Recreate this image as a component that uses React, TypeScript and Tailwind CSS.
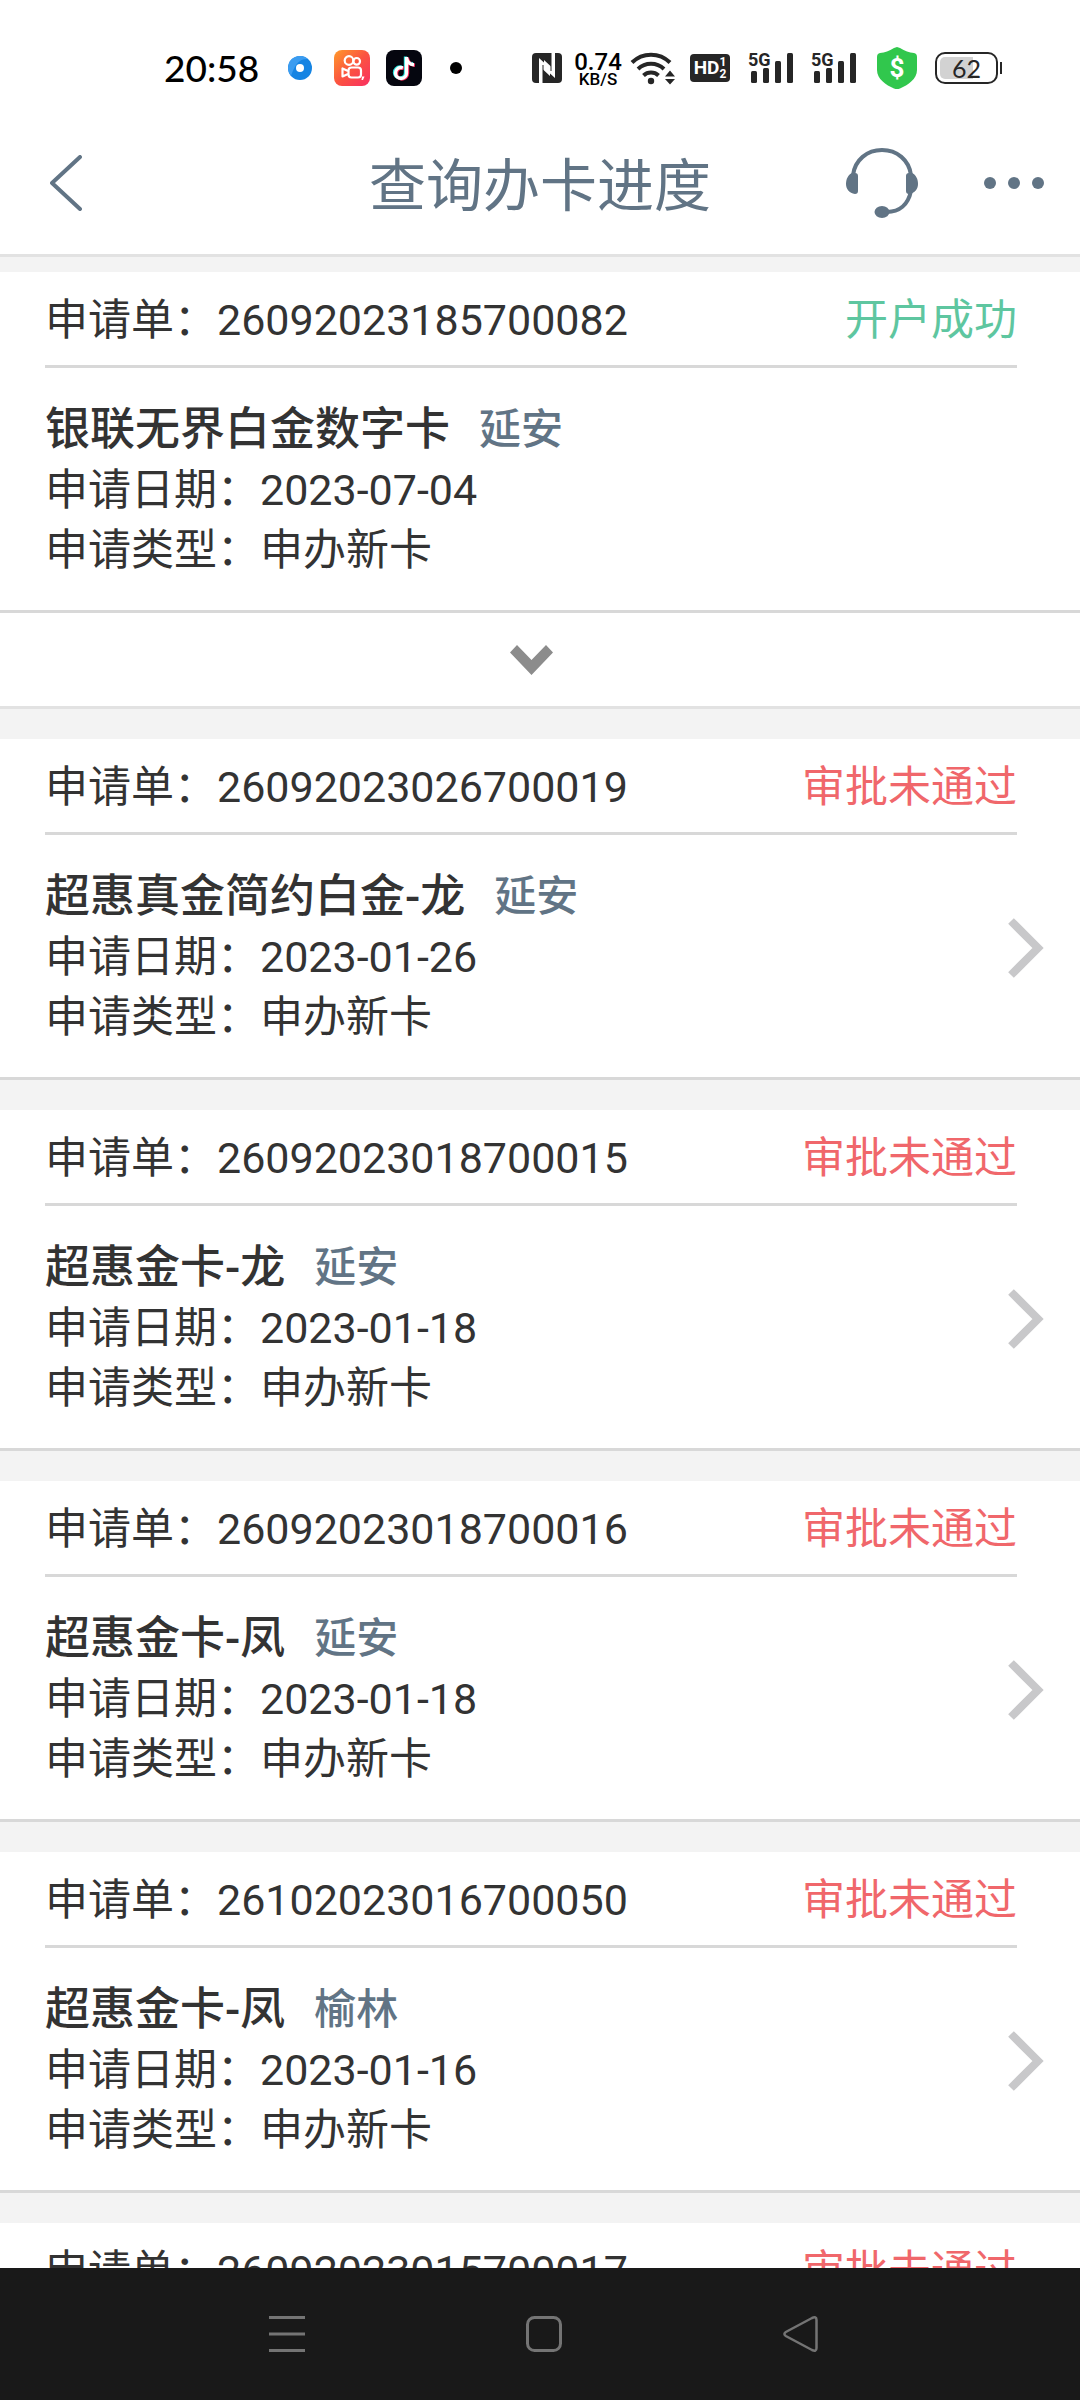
import React from 'react';

interface Application {
  id: string;
  status: 'success' | 'rejected';
  card?: string;
  city?: string;
  date?: string;
  expandable?: boolean;
}

const APPLICATIONS: Application[] = [
  { id: '26092023185700082', status: 'success', card: '银联无界白金数字卡', city: '延安', date: '2023-07-04', expandable: true },
  { id: '26092023026700019', status: 'rejected', card: '超惠真金简约白金-龙', city: '延安', date: '2023-01-26' },
  { id: '26092023018700015', status: 'rejected', card: '超惠金卡-龙', city: '延安', date: '2023-01-18' },
  { id: '26092023018700016', status: 'rejected', card: '超惠金卡-凤', city: '延安', date: '2023-01-18' },
  { id: '26102023016700050', status: 'rejected', card: '超惠金卡-凤', city: '榆林', date: '2023-01-16' },
  { id: '26092023015700017', status: 'rejected' },
];

function SignalIcon() {
  return (
    <div className="relative h-8 w-[46px] text-[#262626]">
      <span className="absolute left-0 top-0 font-['Roboto',sans-serif] text-[18px] font-bold leading-4">5G</span>
      <svg viewBox="0 0 46 32" className="h-8 w-[46px]" fill="currentColor">
        <rect x="3" y="19" width="6" height="12" rx="1.5" />
        <rect x="15" y="16" width="6" height="15" rx="1.5" />
        <rect x="27" y="9" width="6" height="22" rx="1.5" />
        <rect x="39" y="1" width="6" height="30" rx="1.5" />
      </svg>
    </div>
  );
}

function StatusBar() {
  return (
    <div className="flex h-28 items-center justify-between pl-[164px] pr-[78px] pt-6 text-black">
      <div className="flex items-center">
        <span className="font-['Lato',sans-serif] text-[37px] font-medium leading-10">20:58</span>
        <svg viewBox="0 0 24 24" className="ml-[29px] size-6">
          <circle cx="12" cy="12" r="12" fill="#1584e3" />
          <path d="M0 12a12 12 0 0 1 20-9C12 3 8 6 3 20A12 12 0 0 1 0 12z" fill="#3b9cf0" />
          <circle cx="12" cy="12" r="4" fill="#fff" />
        </svg>
        <svg viewBox="0 0 36 36" className="ml-[22px] size-9">
          <defs>
            <linearGradient id="kuai" x1="0" y1="0" x2="1" y2="1">
              <stop offset="0" stopColor="#ff9a2a" />
              <stop offset="0.5" stopColor="#fb5340" />
              <stop offset="1" stopColor="#f92f62" />
            </linearGradient>
          </defs>
          <rect width="36" height="36" rx="8" fill="url(#kuai)" />
          <g fill="none" stroke="#fff" strokeWidth="2.2" strokeLinejoin="round">
            <circle cx="15" cy="10.5" r="4.3" />
            <circle cx="22.7" cy="11.3" r="3.3" />
            <rect x="14.5" y="17.5" width="12.5" height="10" rx="3" />
            <path d="M14 21l-5.500-2.500v8L14 24" />
          </g>
          <path d="M28 26.500h2.500l-1.500 3.500h-1.500z" fill="#fff" />
        </svg>
        <svg viewBox="0 0 36 36" className="ml-4 size-9">
          <rect width="36" height="36" rx="8" fill="#05060f" />
          <g fill="none" strokeWidth="3.400">
            <path d="M19.500 6.500v16a5.500 5.500 0 1 1-5.500-5.500c.8 0 1.200.1 1.800.3M19.500 7c.8 4 3.500 6.500 7.500 6.800" stroke="#25e5e2" />
            <path d="M21.500 7.500v16A5.500 5.500 0 1 1 16 18c.8 0 1.200.1 1.800.3M21.500 8.500c.8 4 3.500 6.500 7.500 6.800" stroke="#f8285a" />
            <path d="M20.500 7v16a5.500 5.500 0 1 1-5.500-5.500c.8 0 1.200.1 1.800.3M20.500 8c.8 4 3.500 6.500 7.500 6.800" stroke="#fff" />
          </g>
        </svg>
        <span className="ml-7 size-3 rounded-full bg-black" />
      </div>
      <div className="flex items-center">
        <svg viewBox="0 0 30 30" className="size-[30px]">
          <rect width="30" height="30" rx="4" fill="#262626" />
          <path d="M7 30V5l11 10v8l-7-6.500V30z" fill="#fff" />
          <path d="M23 0v25L12 15V7l7 6.500V0z" fill="#fff" />
          <path d="M11 30V12M19 0v18" stroke="#262626" strokeWidth="1" />
        </svg>
        <div className="ml-3 flex w-12 flex-col items-center pt-0.5 font-['Roboto',sans-serif] font-medium">
          <span className="text-[24px] leading-5">0.74</span>
          <span className="text-[17px] leading-[15px]">KB/S</span>
        </div>
        <svg viewBox="0 0 46 34" className="ml-2 h-[34px] w-[46px]" fill="none" stroke="#262626" strokeWidth="4">
          <path d="M2 11.500a27 27 0 0 1 38 0" />
          <path d="M8 18a19 19 0 0 1 26 0" />
          <path d="M13.500 24.500a11 11 0 0 1 15 0" />
          <circle cx="21" cy="30" r="3.200" fill="#262626" stroke="none" />
          <path d="M40 19.500l5 6H35zM40 33.500l5-5.500H35z" fill="#262626" stroke="none" />
        </svg>
        <div className="ml-3.5 flex h-7 w-10 items-center justify-center rounded bg-[#262626] font-['Roboto',sans-serif] font-bold text-white">
          <span className="text-[19px] leading-7">HD</span>
          <span className="flex flex-col text-[12px] leading-3">
            <span>1</span>
            <span>2</span>
          </span>
        </div>
        <div className="ml-[18px] flex gap-[17px]">
          <SignalIcon />
          <SignalIcon />
        </div>
        <div className="relative ml-5 h-[42px] w-10">
          <svg viewBox="0 0 40 42" className="h-[42px] w-10">
            <path d="M20 0l3 1c5 3 9 4.500 14 5q3 .5 3 4v13c0 9-9 15-17 18.500q-3 1-6 0C9 38 0 32 0 23V10q0-3.500 3-4c5-.5 9-2 14-5z" fill="#31c74d" />
          </svg>
          <span className="absolute inset-0 text-center font-['Roboto',sans-serif] text-[26px] font-bold leading-[42px] text-white">$</span>
        </div>
        <div className="ml-[18px] flex items-center">
          <div className="relative h-8 w-[63px] rounded-[10px] border-2 border-[#262626] p-[3px]">
            <div className="h-full w-[62%] rounded-l-[5px] bg-[#d2d2d2]" />
            <span className="absolute inset-0 text-center font-['Lato',sans-serif] text-[25px] leading-7 text-[#262626]">62</span>
          </div>
          <span className="ml-0.5 h-3 w-0.5 bg-[#262626]" />
        </div>
      </div>
    </div>
  );
}

function TitleBar() {
  return (
    <div className="grid h-[142px] grid-cols-[1fr_auto_1fr] items-center pl-[50px] pr-9 text-[#617485]">
      <button type="button" aria-label="返回" className="justify-self-start">
        <svg viewBox="0 0 32 56" className="h-14 w-8" fill="none" stroke="currentColor" strokeWidth="4" strokeLinecap="round" strokeLinejoin="round">
          <path d="M30 2L2 28l28 26" />
        </svg>
      </button>
      <h1 className="-ml-3.5 pt-2 text-[57px] leading-[72px]">查询办卡进度</h1>
      <div className="flex items-center justify-end gap-[66px]">
        <button type="button" aria-label="客服">
          <svg viewBox="0 0 72 70" className="h-[70px] w-[72px]">
            <path d="M7 27C9 12 21 2 36 2s27 10 29 25M65 43C62 57 53 64 41 64" fill="none" stroke="currentColor" strokeWidth="4" />
            <path d="M6 25h3q3 0 3 3v15q0 3-3 3C3 45 0 41 0 36s2-9 6-11zM66 25h-3q-3 0-3 3v15q0 3 3 3c6-1 9-5 9-10s-2-9-6-11z" fill="currentColor" />
            <ellipse cx="36" cy="64" rx="7.500" ry="6" fill="currentColor" />
          </svg>
        </button>
        <button type="button" aria-label="更多">
          <svg viewBox="0 0 60 12" className="h-3 w-[60px]" fill="currentColor">
            <circle cx="6" cy="6" r="6" />
            <circle cx="30" cy="6" r="6" />
            <circle cx="54" cy="6" r="6" />
          </svg>
        </button>
      </div>
    </div>
  );
}

function ApplicationCard({ item }: { item: Application }) {
  return (
    <li className="bg-white">
      <div className="ml-[45px] mr-[63px] flex h-24 items-center justify-between border-b-[3px] border-[#d8d8d8] pt-0.5">
        <p>申请单：{item.id}</p>
        {item.status === 'success' ? (
          <span className="text-[#5ec6a0]">开户成功</span>
        ) : (
          <span className="text-[#f0676b]">审批未通过</span>
        )}
      </div>
      {item.card && (
        <a href={`#${item.id}`} className="flex items-center justify-between border-b-[3px] border-[#d8d8d8] pb-[30px] pl-[45px] pr-9 pt-8">
          <div>
            <h2 className="flex items-center gap-[29px] text-[45px] font-medium">
              {item.card}
              <span className="text-[42px] text-[#617485]">{item.city}</span>
            </h2>
            <p>申请日期：{item.date}</p>
            <p>申请类型：申办新卡</p>
          </div>
          {!item.expandable && (
            <svg viewBox="0 0 36 60" className="mb-[18px] h-[60px] w-9" fill="none" stroke="#c8c8ca" strokeWidth="8">
              <path d="M3 3l27 27L3 57" />
            </svg>
          )}
        </a>
      )}
      {item.expandable && (
        <div className="border-b-[3px] border-[#e2e2e2]">
          <button type="button" aria-label="展开" className="flex h-[93px] w-full items-center justify-center pl-[45px] pr-[63px]">
            <svg viewBox="0 0 43 30" className="h-[30px] w-[43px]" fill="#8c8c8c">
              <path d="M7 0l14.500 15L36 0l7 7.500L21.500 30 0 7.500z" />
            </svg>
          </button>
        </div>
      )}
    </li>
  );
}

function NavBar() {
  return (
    <nav className="flex h-[132px] shrink-0 items-center justify-center bg-[#191919] text-[#747474]">
      <div className="ml-2 flex w-[51%] justify-between">
        <button type="button" aria-label="菜单">
          <svg viewBox="0 0 36 36" className="size-9" fill="none" stroke="currentColor" strokeWidth="3">
            <path d="M0 1.500h36M0 18h36M0 34.500h36" />
          </svg>
        </button>
        <button type="button" aria-label="主页">
          <svg viewBox="0 0 36 36" className="size-9" fill="none" stroke="currentColor" strokeWidth="3">
            <rect x="1.500" y="1.500" width="33" height="33" rx="7" />
          </svg>
        </button>
        <button type="button" aria-label="后退">
          <svg viewBox="0 0 36 36" className="size-9" fill="none" stroke="currentColor" strokeWidth="2.500">
            <path d="M2.800 16L29 2Q33.500 0 33.500 4v28q0 4-4.500 2L2.800 20Q0 18 2.800 16z" />
          </svg>
        </button>
      </div>
    </nav>
  );
}

export default function App() {
  return (
    <div className="flex h-screen flex-col bg-[#f3f3f3] font-['Roboto','Noto_Sans_CJK_SC',sans-serif] text-[43px] leading-[60px] text-[#333333]" lang="zh-CN">
      <header className="shrink-0 border-b-[3px] border-[#e2e2e2] bg-white">
        <StatusBar />
        <TitleBar />
      </header>
      <main className="min-h-0 flex-1 overflow-y-auto pt-[15px] [scrollbar-width:none]">
        <ul className="flex flex-col gap-[30px]">
          {APPLICATIONS.map((item) => (
            <ApplicationCard key={item.id} item={item} />
          ))}
        </ul>
      </main>
      <NavBar />
    </div>
  );
}
